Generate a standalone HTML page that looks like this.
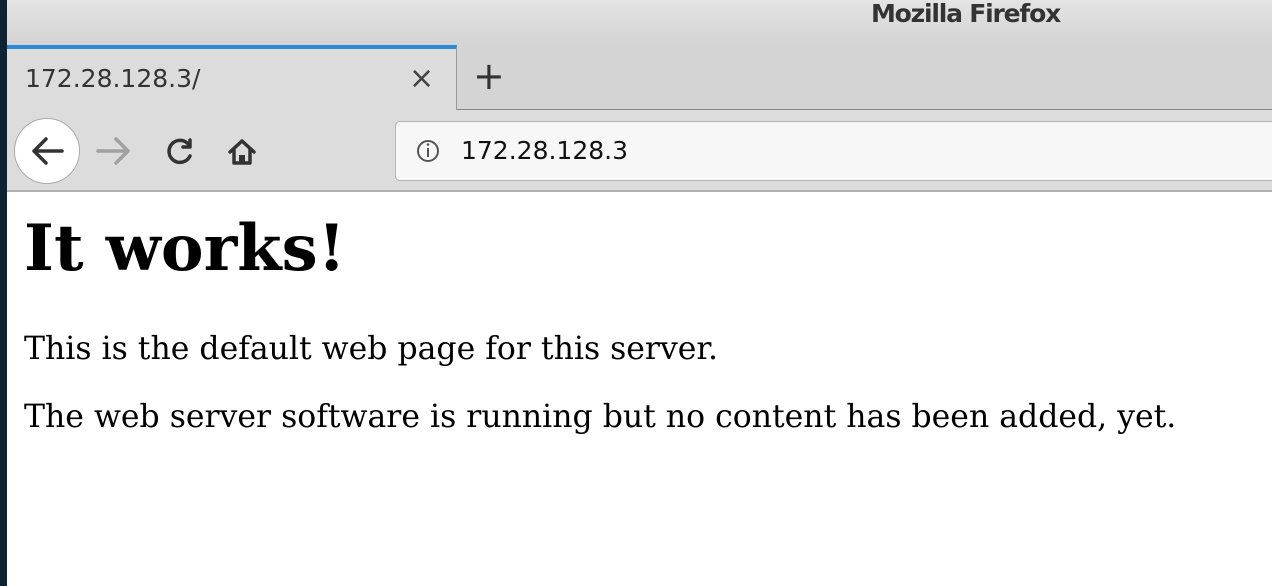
<!DOCTYPE html>
<html><head><meta charset="utf-8"><style>
*{margin:0;padding:0;box-sizing:border-box}
body{width:1272px;height:586px;overflow:hidden;background:#fff;position:relative;font-family:"DejaVu Sans","Liberation Sans",sans-serif}
#strip{position:absolute;left:0;top:0;width:7px;height:586px;background:#0d2233}
#title{position:absolute;left:7px;top:0;right:0;height:110px;background:linear-gradient(#e4e4e4,#d4d4d4 40%,#d4d4d4)}
#ttext{position:absolute;left:864px;top:0;font-size:25px;font-weight:bold;color:#333;line-height:28px;letter-spacing:-1.2px}
#tab{position:absolute;left:7px;top:45px;width:450px;height:66px;background:#dcdcdc;border-top:4px solid #2b8ad3;border-right:1px solid #9a9a9a}
#tab span{position:absolute;left:18px;top:15px;font-size:25px;color:#333}
#tab i{position:absolute;left:402px;top:12px;font-style:normal;font-size:30px;color:#444}
#plus{position:absolute;left:473px;top:56px;font-size:38px;color:#333;line-height:40px}
#tabline{position:absolute;left:457px;top:109px;right:0;height:1px;background:#888}
#tool{position:absolute;left:7px;top:110px;right:0;height:82px;background:#dcdcdc;border-bottom:2px solid #b0b0b0}
#url{position:absolute;left:395px;top:121px;width:900px;height:60px;background:#f7f7f7;border:1px solid #b3b3b3;border-radius:5px}
#url span{position:absolute;left:65px;top:14px;font-size:25px;color:#111}
#back{position:absolute;left:14px;top:118px;width:66px;height:66px;border-radius:50%;background:#fff;border:1px solid #aaa}
#content{position:absolute;left:24px;top:192px;font-family:"DejaVu Serif",serif;color:#000}
h1{font-size:64px;font-weight:bold;margin-top:25px;line-height:64px}
p{font-size:31.5px;line-height:36px;margin-top:50px}
p+p{margin-top:32px}
</style></head><body>
<div id="strip"></div>
<div id="title"><div id="ttext">Mozilla Firefox</div></div>
<div id="tab"><span>172.28.128.3/</span><i>×</i></div>
<div id="plus">+</div>
<div id="tabline"></div>
<div id="tool"></div>
<div id="back"></div>
<div id="url"><span>172.28.128.3</span></div>
<svg style="position:absolute;left:0;top:110px" width="450" height="82">
<g fill="none" stroke-width="3.5" stroke-linecap="round" stroke-linejoin="round">
<path d="M62 41H34M46 29L34 41L46 53" stroke="#333"/>
<path d="M98 41H128M116 29L128 41L116 53" stroke="#a0a0a0"/>
<path d="M189 35A11 11 0 1 0 190 46" stroke="#333"/>
<path d="M190 30V37H183" stroke="#333"/>
<path d="M230 42L242 31L254 42M234 39V53H250V39" stroke="#333"/>
</g>
<rect x="239" y="45" width="6" height="8" fill="#333"/>
<circle cx="428" cy="41" r="10" fill="none" stroke="#555" stroke-width="2"/>
<path d="M428 38V47" stroke="#555" stroke-width="2"/>
<circle cx="428" cy="34.5" r="1.3" fill="#555"/>
</svg>
<div id="content">
<h1>It works!</h1>
<p>This is the default web page for this server.</p>
<p>The web server software is running but no content has been added, yet.</p>
</div>
</body></html>
